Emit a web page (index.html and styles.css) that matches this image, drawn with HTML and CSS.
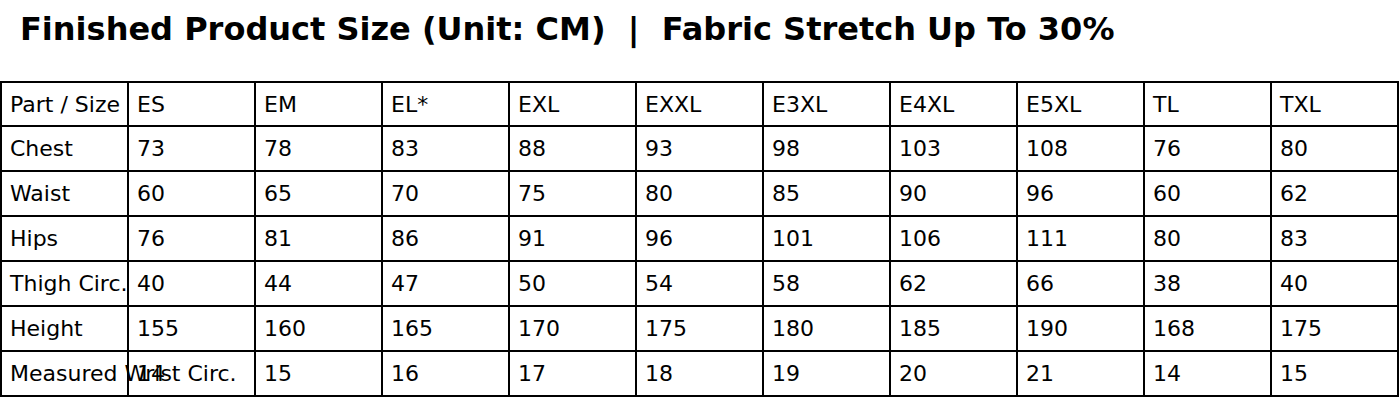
FILE: index.html
```html
<!DOCTYPE html>
<html>
<head>
<meta charset="utf-8">
<link rel="stylesheet" href="styles.css">
</head>
<body>
<h1 class="title">Finished Product Size (Unit: CM)  |  Fabric Stretch Up To 30%</h1>
<div class="grid">
  <div class="cell">Part / Size</div><div class="cell">ES</div><div class="cell">EM</div><div class="cell">EL*</div><div class="cell">EXL</div><div class="cell">EXXL</div><div class="cell">E3XL</div><div class="cell">E4XL</div><div class="cell">E5XL</div><div class="cell">TL</div><div class="cell">TXL</div>
  <div class="cell">Chest</div><div class="cell">73</div><div class="cell">78</div><div class="cell">83</div><div class="cell">88</div><div class="cell">93</div><div class="cell">98</div><div class="cell">103</div><div class="cell">108</div><div class="cell">76</div><div class="cell">80</div>
  <div class="cell">Waist</div><div class="cell">60</div><div class="cell">65</div><div class="cell">70</div><div class="cell">75</div><div class="cell">80</div><div class="cell">85</div><div class="cell">90</div><div class="cell">96</div><div class="cell">60</div><div class="cell">62</div>
  <div class="cell">Hips</div><div class="cell">76</div><div class="cell">81</div><div class="cell">86</div><div class="cell">91</div><div class="cell">96</div><div class="cell">101</div><div class="cell">106</div><div class="cell">111</div><div class="cell">80</div><div class="cell">83</div>
  <div class="cell">Thigh Circ.</div><div class="cell">40</div><div class="cell">44</div><div class="cell">47</div><div class="cell">50</div><div class="cell">54</div><div class="cell">58</div><div class="cell">62</div><div class="cell">66</div><div class="cell">38</div><div class="cell">40</div>
  <div class="cell">Height</div><div class="cell">155</div><div class="cell">160</div><div class="cell">165</div><div class="cell">170</div><div class="cell">175</div><div class="cell">180</div><div class="cell">185</div><div class="cell">190</div><div class="cell">168</div><div class="cell">175</div>
  <div class="cell">Measured Wrist Circ.</div><div class="cell">14</div><div class="cell">15</div><div class="cell">16</div><div class="cell">17</div><div class="cell">18</div><div class="cell">19</div><div class="cell">20</div><div class="cell">21</div><div class="cell">14</div><div class="cell">15</div>
</div>
</body>
</html>
```
FILE: styles.css
```css
html, body {
  margin: 0;
  padding: 0;
  background: #fff;
}
body {
  font-family: "DejaVu Sans", sans-serif;
  color: #000;
  width: 1400px;
  height: 420px;
  overflow: hidden;
}
.title {
  margin: 0;
  padding: 11px 0 0 20px;
  height: 70px;
  box-sizing: border-box;
  font-size: 32px;
  font-weight: bold;
  line-height: 36px;
  white-space: pre;
}
.grid {
  display: grid;
  grid-template-columns: repeat(11, 127px);
  grid-template-rows: 44px repeat(6, 45px);
  width: max-content;
  border-left: 2px solid #000;
  border-top: 2px solid #000;
  margin-top: 11px;
}
.cell {
  box-sizing: border-box;
  border-right: 2px solid #000;
  border-bottom: 2px solid #000;
  padding-left: 8px;
  font-size: 22px;
  line-height: 44px;
  white-space: nowrap;
  overflow: visible;
}
```
